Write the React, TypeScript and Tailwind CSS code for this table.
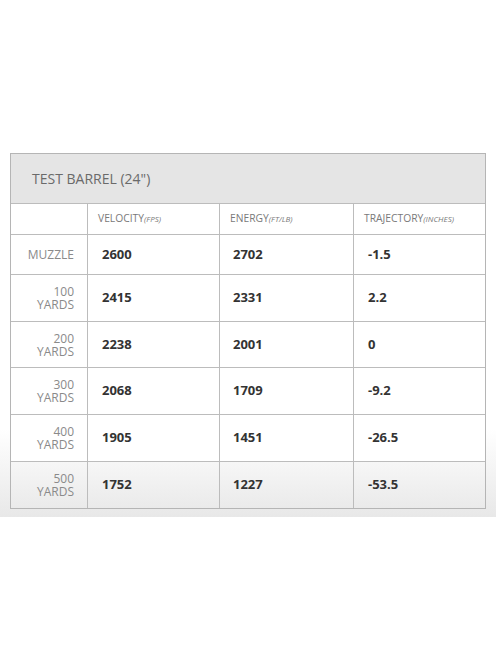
import React from "react";

type Row = {
  label: [string, string?];
  velocity: string;
  energy: string;
  trajectory: string;
  h: string;
};

const rows: Row[] = [
  { label: ["MUZZLE"], velocity: "2600", energy: "2702", trajectory: "-1.5", h: "h-[40px]" },
  { label: ["100", "YARDS"], velocity: "2415", energy: "2331", trajectory: "2.2", h: "h-[47px]" },
  { label: ["200", "YARDS"], velocity: "2238", energy: "2001", trajectory: "0", h: "h-[46px]" },
  { label: ["300", "YARDS"], velocity: "2068", energy: "1709", trajectory: "-9.2", h: "h-[47px]" },
  { label: ["400", "YARDS"], velocity: "1905", energy: "1451", trajectory: "-26.5", h: "h-[47px]" },
  { label: ["500", "YARDS"], velocity: "1752", energy: "1227", trajectory: "-53.5", h: "h-[46px]" },
];

const cols = "grid grid-cols-[77px_132px_134px_133px]";

function HeadCell({ main, unit, last }: { main: string; unit: string; last?: boolean }) {
  return (
    <div
      className={`flex items-center pl-[10px] text-[10.3px] text-[#7a7a7a] ${
        last ? "" : "border-r border-[#bcbcbc]"
      }`}
    >
      {main}
      <span className="text-[8px] italic">{unit}</span>
    </div>
  );
}

export default function App() {
  return (
    <div
      className="min-h-[664px] bg-white"
      style={{ fontFamily: '"Open Sans", "Liberation Sans", sans-serif' }}
    >
      <div className="h-[517px] bg-linear-to-b from-white from-[83%] to-[#e8e8e8] px-[10px] pt-[153px]">
        <div className="w-[476px] border border-[#b5b5b5]">
          <div className="flex h-[50px] items-center bg-[#e5e5e5] pl-[21px] text-[14px] text-[#6a6a6a] border-b border-[#bcbcbc]">
            TEST BARREL (24")
          </div>
          <div className={`${cols} h-[31px] bg-white border-b border-[#bcbcbc]`}>
            <div className="border-r border-[#bcbcbc]" />
            <HeadCell main="VELOCITY" unit="(FPS)" />
            <HeadCell main="ENERGY" unit="(FT/LB)" />
            <HeadCell main="TRAJECTORY" unit="(INCHES)" last />
          </div>
          {rows.map((r, i) => {
            const isLast = i === rows.length - 1;
            return (
              <div
                key={r.velocity}
                className={`${cols} ${r.h} ${isLast ? "" : "bg-white border-b border-[#bcbcbc]"}`}
              >
                <div className="flex flex-col items-end justify-center pr-[13px] text-[12px] leading-[13px] text-[#8a8a8a] border-r border-[#bcbcbc]">
                  <span>{r.label[0]}</span>
                  {r.label[1] && <span>{r.label[1]}</span>}
                </div>
                <div className="flex items-center pl-[14px] text-[13px] font-bold text-[#333] border-r border-[#bcbcbc]">
                  {r.velocity}
                </div>
                <div className="flex items-center pl-[13px] text-[13px] font-bold text-[#333] border-r border-[#bcbcbc]">
                  {r.energy}
                </div>
                <div className="flex items-center pl-[14px] text-[13px] font-bold text-[#333]">
                  {r.trajectory}
                </div>
              </div>
            );
          })}
        </div>
      </div>
    </div>
  );
}
